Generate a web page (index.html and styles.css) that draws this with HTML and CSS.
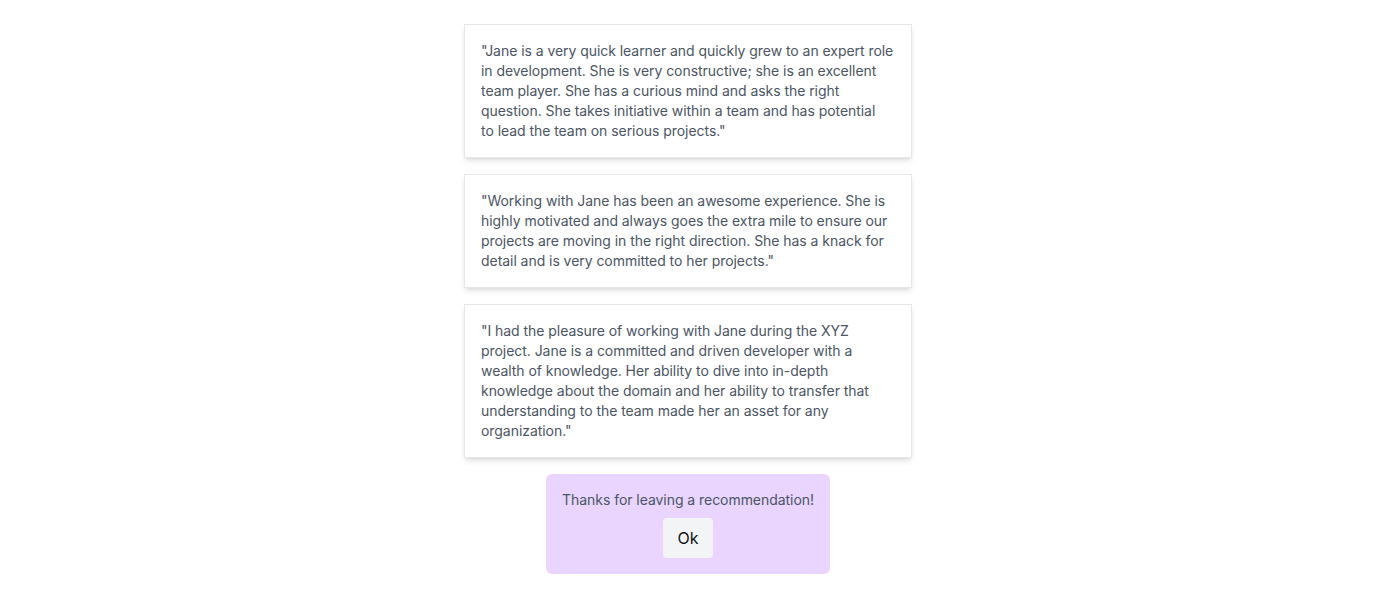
FILE: index.html
```html
<!DOCTYPE html>
<html lang="en">
<head>
<meta charset="utf-8">
<title>Recommendations</title>
<link rel="stylesheet" href="styles.css">
</head>
<body>
<main class="page">
  <div class="card">"Jane is a very quick learner and quickly grew to an expert role in development. She is very constructive; she is an excellent team player. She has a curious mind and asks the right question. She takes initiative within a team and has potential<br>to lead the team on serious projects."</div>
  <div class="card">"Working with Jane has been an awesome experience. She is highly motivated and always goes the extra mile to ensure our projects are moving in the right direction. She has a knack for detail and is very committed to her projects."</div>
  <div class="card">"I had the pleasure of working with Jane during the XYZ project. Jane is a committed and driven developer with a wealth of knowledge. Her ability to dive into in-depth knowledge about the domain and her ability to transfer that understanding to the team made her an asset for any organization."</div>
  <div class="notice">
    <p class="notice-text">Thanks for leaving a recommendation!</p>
    <button class="ok-btn">Ok</button>
  </div>
</main>
</body>
</html>
```

FILE: styles.css
```css
* { box-sizing: border-box; }
html, body { margin: 0; padding: 0; background: #fff; }
body {
  font-family: Inter, "Noto Sans", sans-serif;
  font-size: 14px;
  line-height: 20px;
  letter-spacing: -0.05px;
  color: #4b5563;
}
.page {
  display: flex;
  flex-direction: column;
  align-items: center;
  gap: 16px;
  padding-top: 24px;
}
.card {
  width: 448px;
  padding: 16px;
  border: 1px solid #e5e7eb;
  background: #fff;
  box-shadow: 0 4px 6px -1px rgba(0,0,0,0.1), 0 2px 4px -2px rgba(0,0,0,0.1);
}
.notice {
  width: 284px;
  padding: 16px 0;
  background: #e9d5ff;
  border-radius: 6px;
  display: flex;
  flex-direction: column;
  align-items: center;
  gap: 8px;
}
.notice-text { margin: 0; white-space: nowrap; }
.ok-btn {
  width: 50px;
  height: 40px;
  border: none;
  border-radius: 4px;
  background: #f3f4f6;
  color: #111;
  font-family: Inter, "Noto Sans", sans-serif;
  font-size: 16px;
  cursor: pointer;
}
```
